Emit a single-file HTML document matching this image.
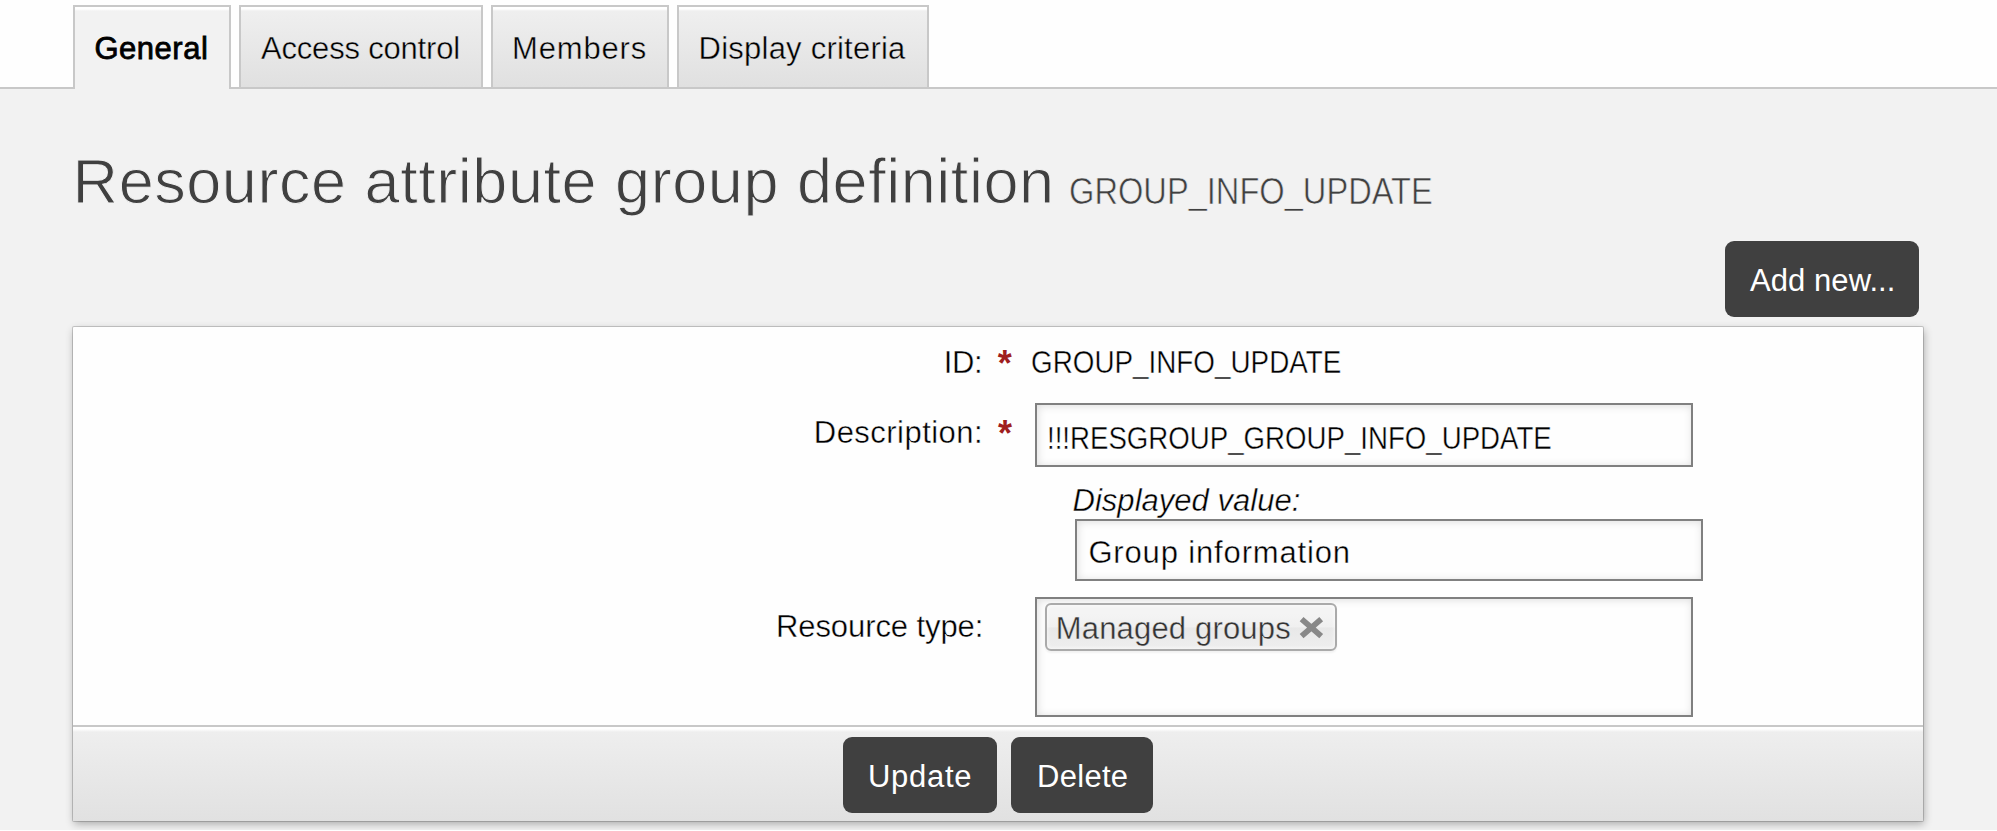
<!DOCTYPE html>
<html><head><meta charset="utf-8">
<style>
html,body{margin:0;padding:0;}
body{width:1997px;height:831px;overflow:hidden;background:#f2f2f2;position:relative;font-family:"Liberation Sans",sans-serif;color:#000;}
.a{position:absolute;}
.t{position:absolute;white-space:nowrap;line-height:1;}
#topband{left:0;top:0;width:1997px;height:87px;background:#fefefe;border-bottom:2px solid #c8c8c8;}
.tab{position:absolute;top:5px;height:82px;box-sizing:border-box;border:2px solid #c8c8c8;border-bottom:0;background:linear-gradient(#ffffff 0,#ffffff 2px,#efefef 4px,#e0e0e0 100%);}
.tab.act{height:84px;background:linear-gradient(#ffffff 0,#ffffff 2px,#f2f2f2 4px,#f2f2f2 100%);}
#panel{left:73px;top:327px;width:1850px;height:494px;box-sizing:border-box;background:#fefefe;border-radius:1px;box-shadow:0 0 0 1px rgba(0,0,0,0.17),1px 3px 9px rgba(0,0,0,0.3);}
#footer{left:73px;top:725px;width:1850px;height:96px;box-sizing:border-box;border-top:2px solid #c8c8c8;background:linear-gradient(#ffffff 0,#ffffff 2px,#eeeeee 5px,#e1e1e1 100%);}
.btn{position:absolute;background:#404040;border-radius:9px;}
.inp{position:absolute;box-sizing:border-box;border:2px solid #808080;background:#fefefe;box-shadow:inset 1px 1px 9px rgba(0,0,0,0.13);}
#tag{left:1045px;top:603px;width:292px;height:48px;box-sizing:border-box;border:2px solid #aaaaaa;border-radius:6px;background:linear-gradient(#f4f4f4 20%,#f0f0f0 50%,#e8e8e8 52%,#eeeeee 100%);box-shadow:0 0 4px rgba(255,255,255,0.9) inset,0 2px 2px rgba(0,0,0,0.05);}
</style></head><body>
<div id="topband" class="a"></div>
<div class="tab act" style="left:73px;width:158px;"></div>
<div class="tab" style="left:239px;width:244px;"></div>
<div class="tab" style="left:491px;width:178px;"></div>
<div class="tab" style="left:677px;width:252px;"></div>

<div id="panel" class="a"></div>
<div id="footer" class="a"></div>
<div class="btn" style="left:1725px;top:241px;width:194px;height:76px;"></div>
<div class="btn" style="left:843px;top:737px;width:154px;height:76px;"></div>
<div class="btn" style="left:1011px;top:737px;width:142px;height:76px;"></div>

<div class="inp" style="left:1035px;top:403px;width:658px;height:64px;"></div>
<div class="inp" style="left:1075px;top:519px;width:628px;height:62px;"></div>
<div class="inp" style="left:1035px;top:597px;width:658px;height:120px;"></div>
<div id="tag" class="a"></div>
<svg class="a" style="left:1299px;top:616px" width="25" height="23" viewBox="0 0 25 23"><path d="M2.6 3.1L22.2 20.1M22.2 3.1L2.6 20.1" stroke="#888" stroke-width="5.8" fill="none"/></svg>
<div class="a" style="left:0;top:830px;width:1997px;height:1px;background:#fff"></div>
<div class="t" style="left:94.5px;top:33px;font-size:31px;color:#000;-webkit-text-stroke:0.8px #000;letter-spacing:0.50px;">General</div>
<div class="t" style="left:261.0px;top:33px;font-size:31px;color:#000;-webkit-text-stroke:0.4px #e9e9e9;letter-spacing:-0.19px;">Access control</div>
<div class="t" style="left:512.0px;top:33px;font-size:31px;color:#000;-webkit-text-stroke:0.4px #e9e9e9;letter-spacing:0.83px;">Members</div>
<div class="t" style="left:698.6px;top:33px;font-size:31px;color:#000;-webkit-text-stroke:0.4px #e9e9e9;letter-spacing:0.23px;">Display criteria</div>
<div class="t" style="left:72.6px;top:150px;font-size:63px;color:#404040;-webkit-text-stroke:1.0px #f2f2f2;letter-spacing:0.54px;">Resource attribute group definition</div>
<div class="t" style="left:1069.2px;top:174px;font-size:36px;color:#404040;-webkit-text-stroke:0.6px #f2f2f2;transform:scaleX(0.9063);transform-origin:0 0;">GROUP_INFO_UPDATE</div>
<div class="t" style="left:1750.0px;top:265px;font-size:31px;color:#fff;-webkit-text-stroke:0.0px #404040;letter-spacing:0.07px;">Add new...</div>
<div class="t" style="left:943.7px;top:347px;font-size:31px;color:#000;-webkit-text-stroke:0.4px #fefefe;letter-spacing:-0.35px;">ID:</div>
<div class="t" style="left:997.8px;top:346px;font-size:36px;color:#a01e1e;font-weight:bold;">*</div>
<div class="t" style="left:1031.1px;top:347px;font-size:31px;color:#000;-webkit-text-stroke:0.4px #fefefe;transform:scaleX(0.8977);transform-origin:0 0;">GROUP_INFO_UPDATE</div>
<div class="t" style="left:813.8px;top:417px;font-size:31px;color:#000;-webkit-text-stroke:0.4px #fefefe;letter-spacing:0.47px;">Description:</div>
<div class="t" style="left:998.0px;top:416px;font-size:36px;color:#a01e1e;font-weight:bold;">*</div>
<div class="t" style="left:1047.3px;top:423px;font-size:31px;color:#000;-webkit-text-stroke:0.4px #fefefe;transform:scaleX(0.8915);transform-origin:0 0;">!!!RESGROUP_GROUP_INFO_UPDATE</div>
<div class="t" style="left:1072.5px;top:485px;font-size:31px;color:#000;-webkit-text-stroke:0.4px #fefefe;font-style:italic;letter-spacing:0.03px;">Displayed value:</div>
<div class="t" style="left:1088.4px;top:537px;font-size:31px;color:#000;-webkit-text-stroke:0.4px #fefefe;letter-spacing:0.85px;">Group information</div>
<div class="t" style="left:776.0px;top:611px;font-size:31px;color:#000;-webkit-text-stroke:0.4px #fefefe;letter-spacing:-0.09px;">Resource type:</div>
<div class="t" style="left:1055.8px;top:613px;font-size:31px;color:#333;-webkit-text-stroke:0.35px #eeeeee;letter-spacing:0.17px;">Managed groups</div>
<div class="t" style="left:868.0px;top:761px;font-size:31px;color:#fff;-webkit-text-stroke:0.0px #404040;letter-spacing:0.70px;">Update</div>
<div class="t" style="left:1037.0px;top:761px;font-size:31px;color:#fff;-webkit-text-stroke:0.0px #404040;letter-spacing:0.30px;">Delete</div>

</body></html>
